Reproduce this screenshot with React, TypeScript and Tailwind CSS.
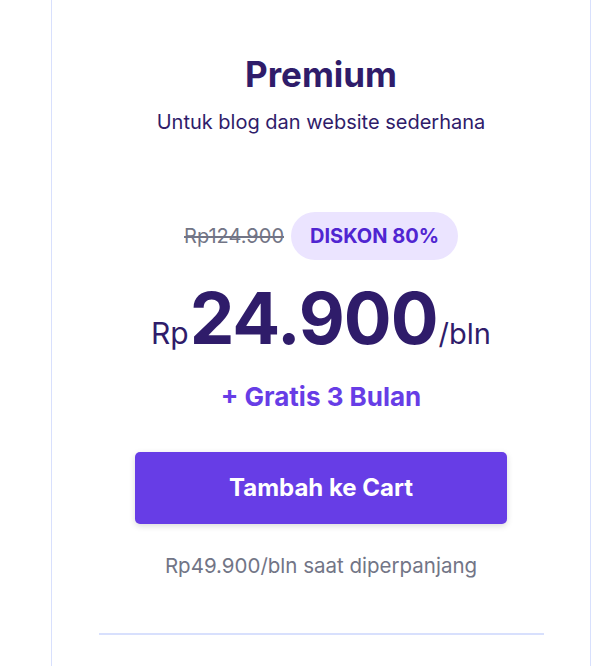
import React from "react";

export default function App() {
  return (
    <div className="min-h-[666px] bg-white" style={{ fontFamily: "Inter, 'Noto Sans', sans-serif" }}>
      <div className="ml-[51px] w-[540px] h-[666px] border-x border-[#d8e0fd] flex flex-col items-center pt-[54px]">
        <h3 className="text-[35px] font-bold leading-[40px] text-[#2f1c6a]">Premium</h3>
        <p className="mt-[14px] text-[20px] leading-[28px] text-[#2f1c6a]">Untuk blog dan website sederhana</p>

        <div className="mt-[76px] flex items-center gap-[7px]">
          <span className="text-[20px] text-[#727586] line-through">Rp124.900</span>
          <span className="h-[48px] px-[19px] rounded-full bg-[#ebe4ff] flex items-center text-[20px] font-bold text-[#5025d1]">
            DISKON 80%
          </span>
        </div>

        <div className="mt-[20px] flex items-baseline text-[#2f1c6a]">
          <span className="text-[30px]">Rp</span>
          <span className="text-[71px] font-bold leading-[76px] tracking-[-1px] mx-[1px]">24.900</span>
          <span className="text-[29px]">/bln</span>
        </div>

        <div className="mt-[25px] text-[26px] font-bold leading-[32px] text-[#673de6]">+ Gratis 3 Bulan</div>

        <button className="mt-[39px] w-[372px] h-[72px] rounded-[5px] bg-[#673de6] text-white text-[24px] font-bold shadow-[0_2px_6px_rgba(0,0,0,0.15)]">
          Tambah ke Cart
        </button>

        <p className="mt-[28px] text-[20.5px] leading-[28px] text-[#727586]">Rp49.900/bln saat diperpanjang</p>

        <div className="mt-[53px] w-[445px] h-[2px] bg-[#d8e0fd]" />
      </div>
    </div>
  );
}
